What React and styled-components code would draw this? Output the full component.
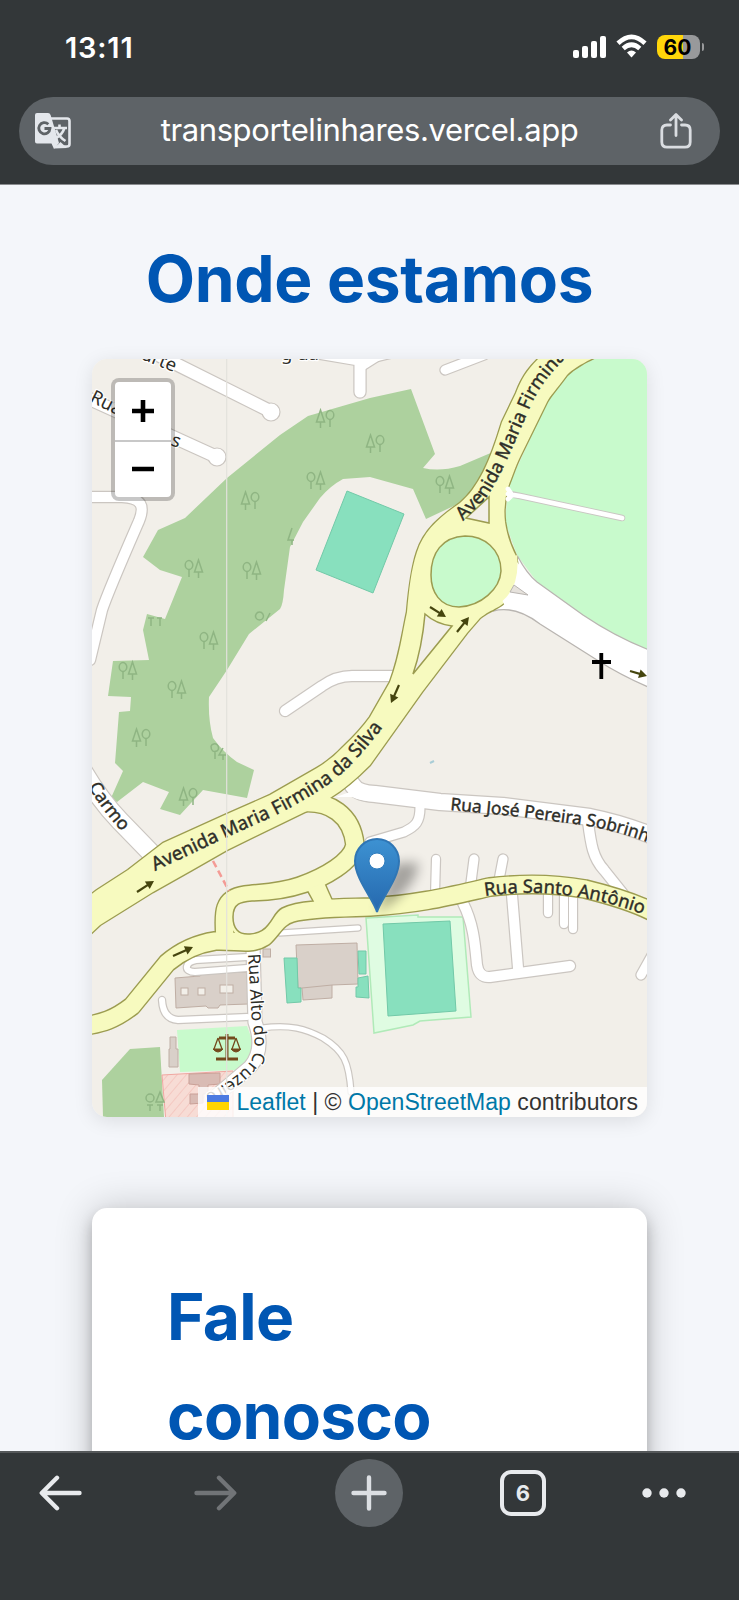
import React from "react";
import styled, { createGlobalStyle } from "styled-components";

const GlobalStyle = createGlobalStyle`
  * { box-sizing: border-box; }
  body { margin: 0; background: #f4f6fa; }
`;

const sans = `Inter, "Liberation Sans", sans-serif`;

const Screen = styled.div`
  width: 739px;
  height: 1600px;
  display: flex;
  flex-direction: column;
  overflow: hidden;
  background: #f4f6fa;
  font-family: ${sans};
`;

const Header = styled.header`
  flex: none;
  height: 185px;
  background: #333739;
  border-bottom: 1px solid #8a8c8f;
`;

const StatusBar = styled.div`
  height: 97px;
  padding: 34px 35px 0 65px;
  display: flex;
  justify-content: space-between;
  align-items: flex-start;
  color: #fff;
`;

const Clock = styled.span`
  font-size: 29px;
  line-height: 27px;
  font-weight: 600;
  letter-spacing: 0.8px;
`;

const StatusIcons = styled.div`
  display: flex;
  gap: 10px;
  height: 26px;
`;

const Battery = styled.div`
  display: flex;
  align-items: center;
  gap: 2px;
  margin-top: 1px;
  height: 24px;
`;

const BatteryBody = styled.div`
  width: 43px;
  height: 24px;
  border-radius: 8px;
  background: linear-gradient(90deg, #ffd60a 61%, #98999b 61%);
  color: #000;
  font-weight: 700;
  font-size: 21px;
  line-height: 25px;
  padding-right: 1px;
  text-align: center;
`;

const BatteryNub = styled.div`
  width: 2.5px;
  height: 8px;
  border-radius: 0 3px 3px 0;
  background: #98999b;
`;

const AddressBar = styled.div`
  margin: 0 19px;
  height: 68px;
  border-radius: 34px;
  background: #5e6367;
  display: flex;
  align-items: center;
  justify-content: space-between;
  padding: 0 28px 0 15px;
`;

const Address = styled.span`
  color: #fff;
  font-size: 31px;
  line-height: 40px;
  padding-left: 7px;
  letter-spacing: -0.38px;
  margin-top: -2px;
`;

const Page = styled.main`
  flex: 1;
  min-height: 0;
  overflow: hidden;
  padding: 0 92px;
`;

const Heading = styled.h1`
  margin: 0;
  color: #0056b3;
  font-size: 64px;
  font-weight: 700;
  line-height: ${(p) => (p.$center ? "100px" : "98.5px")};
  text-align: ${(p) => (p.$center ? "center" : "left")};
  letter-spacing: ${(p) => (p.$center ? "-0.3px" : "-0.7px")};
`;

const MapSection = styled.section`
  padding-top: 44px;
`;

const MapFrame = styled.div`
  position: relative;
  margin-top: 30px;
  height: 758px;
  border-radius: 15px;
  overflow: hidden;
  background: #f2efe9;
`;

const MapShadow = styled.div`
  border-radius: 15px;
  box-shadow: 0 4px 19px rgba(0, 0, 0, 0.1);
`;

const ZoomControl = styled.div`
  position: absolute;
  left: 19px;
  top: 19px;
  width: 64px;
  border: 4px solid rgba(0, 0, 0, 0.22);
  border-radius: 8px;
  background: #fff;
  background-clip: padding-box;
`;

const ZoomButton = styled.button`
  display: flex;
  align-items: center;
  justify-content: center;
  width: 100%;
  height: 57.5px;
  padding: 0;
  border: 0;
  background: none;
  & + & { border-top: 2px solid #c8c8c8; }
`;

const Attribution = styled.div`
  position: absolute;
  right: 0;
  bottom: 0;
  height: 30px;
  width: 449px;
  padding: 0 9px;
  display: flex;
  align-items: center;
  justify-content: flex-end;
  background: rgba(255, 255, 255, 0.8);
  color: #333;
  font: 23px/30px "Liberation Sans", Arial, sans-serif;
  letter-spacing: 0.04px;
  white-space: pre;
`;

const Flag = styled.span`
  width: 23px;
  height: 15px;
  margin-right: 7px;
  background: linear-gradient(#4c7be1 50%, #ffd500 50%);
`;

const MapLink = styled.a`
  color: #0078a8;
`;

const ContactCard = styled.section`
  margin-top: 91px;
  height: 400px;
  border-radius: 15px;
  background: #fff;
  padding: 60px 75px;
  box-shadow: 0 0 38px rgba(0, 0, 0, 0.2), 0 8px 14px rgba(0, 0, 0, 0.22);
`;

const Toolbar = styled.nav`
  flex: none;
  height: 149px;
  padding-top: 6px;
  background: #333739;
  border-top: 2px solid #55585a;
  display: grid;
  grid-template-columns: 138px 153px 155px 154px 128px;
  justify-content: start;
  justify-items: center;
  align-items: start;
`;

const ToolButton = styled.button`
  width: ${(p) => p.$w || 44}px;
  height: 68px;
  padding: 0;
  border: 0;
  background: ${(p) => (p.$round ? "#5e6367" : "none")};
  border-radius: ${(p) => (p.$round ? "50%" : "0")};
  color: ${(p) => (p.$dim ? "#717477" : "#e8eaed")};
  display: flex;
  align-items: center;
  justify-content: center;
`;

const BackButton = styled(ToolButton)`
  margin-right: 16px;
`;

const TabCount = styled.span`
  width: 46px;
  height: 46px;
  flex: none;
  border: 4px solid #e8eaed;
  border-radius: 11px;
  font: 700 22px/39px ${sans};
  text-align: center;
`;

const MapText = styled.text`
  font-family: "Noto Sans", "Open Sans", sans-serif;
  font-size: ${(p) => p.$size || 18.5}px;
  fill: #2e2e28;
  stroke: ${(p) => p.$halo || "#2e2e28"};
  stroke-width: ${(p) => (p.$halo ? "2.5px" : "0.4px")};
  stroke-linejoin: round;
  paint-order: stroke;
`;

const avenue =
  "M85 899 L97 890 L128 870 L163 843 L227 814 L270 795 L317 768 Q332 759 343 747 Q360 731 370 717 L390 682 C400 655 402 635 407 612 C409 590 411 570 417 552 C424 530 440 517 460 503 C478 488 490 462 502 422 L516 393 C522 377 530 365 546 352 L606 352 C585 362 575 367 567 375 C556 390 550 396 547 402 L521 455 C515 467 511 480 508 487 Q503 504 505 522 C507 536 511 546 516 556 C520 575 516 590 506 601 C500 607 497 607 493 610 C486 613 483 616 480 618 L467 633 L422 692 L370 765 C356 779 343 790 330 798 L307 811 L227 850 L192 870 L153 892 L100 925 L85 939 Z";

const yellowRoads = [
  "M300 803 C330 800 352 815 355 845 C352 862 325 877 300 886 C280 893 262 893 245 895 C223 898 223 912 225 937",
  "M316 886 L324 904",
  "M85 1026 C102 1023 114 1020 132 1006 L167 963 C180 952 195 944 215 941 C238 940 250 946 264 937 C273 929 277 917 292 913 C310 908 340 908 370 907 C420 904 450 896 490 887 Q540 881 585 889 Q630 900 655 913",
];

const rampIsland =
  "M233 917 C233 903 241 902 252 901 C275 901 290 898 308 892 L313 901 C300 902 290 904 282 908 C275 912 274 918 268 925 Q262 933 250 934 C238 935 233 928 233 917 Z";

const whiteRoads = [
  ["M160 356 L272 412", 12],
  ["M85 397 L217 457", 12],
  ["M85 497 L122 497 C142 498 145 506 139 521 C122 560 108 592 102 610 L90 660", 10],
  ["M80 766 Q98 798 120 821 L154 856", 18],
  ["M300 350 L359 360 L400 350 M360 355 L360 392", 11],
  ["M445 370 L484 355 M362 366 L384 352", 9],
  ["M285 711 L322 686 Q336 676 352 676 L402 676", 10],
  ["M352 784 Q356 793 375 794 L440 802 L503 806 L590 817 Q625 824 655 837", 16],
  ["M420 807 C420 822 416 826 404 832 L370 842", 9],
  ["M588 822 C591 845 593 858 604 870 L624 895", 10],
  ["M436 859 L435 895", 8],
  ["M474 859 L470 890", 9],
  ["M503 859 L498 885", 9],
  ["M463 903 C474 925 475 945 477 965 Q479 978 490 977 L570 966", 10],
  ["M512 895 L518 968", 10],
  ["M548 890 L548 913 M564 892 L564 924 M573 892 L573 929", 8],
  ["M641 975 L655 950", 9],
  ["M247 957 L196 960 C185 962 183 972 195 972 L247 968", 6],
  ["M162 1000 Q163 1019 178 1020 L247 1017", 6],
  ["M253 947 L255 1022 Q265 1050 250 1067 L216 1096", 13],
  ["M262 1028 C290 1024 306 1029 323 1038 C344 1051 349 1062 351 1092", 5],
  ["M280 933 L358 928", 5],
];

const bigRoad =
  "M505 600 L518 557 Q527 574 537 582 L583 615 Q620 640 660 654 L660 692 Q625 678 597 660 L540 624 Q515 605 493 611 Z";

const forest =
  "M370 398 L411 389 L435 454 L423 468 Q440 472 460 466 L493 452 Q485 490 460 503 L426 519 L413 489 L370 477 L343 479 Q330 486 320 498 L303 522 L290 547 L284 590 Q283 605 280 609 L249 634 L227 670 L209 697 Q208 720 213 738 Q223 752 237 762 L254 770 L247 798 L203 790 L180 815 L160 809 L169 792 L143 782 L117 802 L111 798 L123 771 L115 763 L119 712 L130 711 L131 697 L108 696 L113 661 L149 660 L143 630 L147 614 L165 619 L182 577 L160 570 L143 557 L158 530 L185 518 L227 478 L280 435 L308 416 Z";

const trees = [
  [325, 419, 1], [375, 444, 1], [250, 501, 1], [316, 481, 0], [194, 569, 0], [252, 571, 0],
  [445, 485, 0], [209, 641, 0], [128, 671, 0], [177, 690, 0], [141, 738, 1], [188, 797, 1],
];

const arrows = [
  [137, 892, 154, 881], [173, 956, 193, 947], [430, 607, 446, 617],
  [457, 632, 469, 617], [399, 685, 391, 703], [630, 671, 647, 676],
];

function TreePair({ x, y, coniferFirst }) {
  return (
    <g
      transform={`translate(${x} ${y})${coniferFirst ? " scale(-1 1)" : ""}`}
      fill="none"
      stroke="#8fb583"
      strokeWidth="1.5"
    >
      <ellipse cx="-5" cy="-4" rx="3.8" ry="4.4" />
      <path d="M-5 0 V8 M4.500 -9 L0.500 3 H8.500 Z M4.500 3 V9" />
    </g>
  );
}

function Arrow({ p: [x1, y1, x2, y2] }) {
  const angle = (Math.atan2(y2 - y1, x2 - x1) * 180) / Math.PI;
  const len = Math.hypot(x2 - x1, y2 - y1);
  return (
    <g transform={`translate(${x1} ${y1}) rotate(${angle})`}>
      <path d={`M0 0 H${len - 4}`} stroke="#45450e" strokeWidth="2.2" />
      <path d={`M${len} 0 l-8 -4.5 v9 z`} fill="#45450e" />
    </g>
  );
}

function CurvedLabel({ id, d, children, ...rest }) {
  return (
    <>
      <path id={id} d={d} fill="none" />
      <MapText {...rest}>
        <textPath href={`#${id}`}>{children}</textPath>
      </MapText>
    </>
  );
}

function StreetMap() {
  return (
    <svg width="555" height="758" viewBox="92 359 555 758" display="block">
      <defs>
        <pattern id="hatch" width="7" height="7" patternUnits="userSpaceOnUse" patternTransform="rotate(40)">
          <rect width="7" height="7" fill="#f7dcd5" />
          <path d="M0 0 V7" stroke="#f4c8c1" strokeWidth="2" />
        </pattern>
        <linearGradient id="pinFill" x1="0" y1="0" x2="0" y2="1">
          <stop offset="0" stopColor="#3d92d2" />
          <stop offset="1" stopColor="#2568ae" />
        </linearGradient>
        <filter id="soft" x="-60%" y="-60%" width="220%" height="220%">
          <feGaussianBlur stdDeviation="6" />
        </filter>
      </defs>

      <path d={forest} fill="#add19e" />
      <path d="M130 1049 L160 1047 L164 1117 L103 1117 L102 1080 Z" fill="#add19e" />
      <path d="M597 350 L567 375 L547 402 L508 487 L505 522 L517 555 L537 582 L583 615 L603 630 L660 655 V350 Z" fill="#c8facc" />
      <path d="M347 491 L404 514 L373 593 L316 570 Z" fill="#88e0be" stroke="#72c9a8" />
      <path d="M366 918 L418 915 V917 L463 917 L471 1017 L420 1021 L413 1025 L374 1033 Z" fill="#dffce2" stroke="#b0eab8" strokeWidth="1.5" />
      <path d="M383 924 L450 921 L456 1011 L388 1016 Z" fill="#88e0be" stroke="#72c9a8" />
      <path d="M177 1030 L247 1026 L256 1050 L237 1070 L180 1072 Z" fill="#c8facc" />
      <path d="M162 1075 L233 1071 V1122 H166 Z" fill="url(#hatch)" stroke="#f0a6a0" />
      {trees.map(([x, y, c]) => (
        <TreePair key={`${x}-${y}`} x={x} y={y} coniferFirst={c} />
      ))}
      <g fill="none" stroke="#8fb583" strokeWidth="1.5">
        <path d="M292 528 L288 540 H294 M292 540 V545 M148 618 h6 M151 618 V626 M157 618 h5 M160 618 V626" />
        <path d="M256 618 a4 4 0 1 1 7 0 a4 4 0 0 1 -7 0 M270 613 L266 621" />
        <path d="M211 746 a4 4 0 1 1 6 5 q-6 2 -6 -5 M215 752 V759 M223 748 L219 755 H226 M223 755 V760" />
        <circle cx="150" cy="1098" r="4" />
        <path d="M160 1092 L156 1102 H164 Z M147 1105 h6 M150 1105 V1111 M157 1105 h6 M160 1105 V1111" />
      </g>

      <g fill="#d9d0c9" stroke="#bfaea4">
        <path d="M296 945 L357 943 L358 984 L332 985 V998 L303 1000 L302 988 L298 988 Z" />
        <path d="M302 988 L332 985" />
        <path d="M175 978 L200 976 L205 972 L247 972 L248 1004 L220 1005 L218 1008 L208 1008 L206 1006 L176 1008 Z" />
        <rect x="263" y="949" width="7.5" height="8" />
        <path d="M170 1037 H176 V1049 H178 V1067 H169 V1049 H170 Z" />
        <g fill="#f2efe9">
          <rect x="181" y="988" width="7" height="7" />
          <rect x="198" y="988" width="7" height="7" />
          <rect x="220" y="985" width="13" height="8" />
        </g>
      </g>
      <path d="M189 1074 L220 1073 L220 1084 L208 1085 V1094 H203 V1103 L190 1104 V1094 H199 V1085 L189 1084 Z" fill="#d9bbb4" stroke="#c9a097" />
      <g fill="#88e0be" stroke="#72c9a8">
        <path d="M284 958 H297 L298 988 H301 V1002 L287 1003 Z" />
        <path d="M358 951 L366 951 V974 L359 974 Z M358 978 L368 976 L369 998 L356 997 V987 H358 Z" />
      </g>

      <g fill="none" stroke="#cbc6c1" strokeLinecap="round" strokeLinejoin="round">
        {whiteRoads.map(([d, w]) => (
          <path key={d} d={d} strokeWidth={w + 2.4} />
        ))}
      </g>
      <g fill="#fff" stroke="#cbc6c1" strokeWidth="1.2">
        <circle cx="271" cy="412" r="9" />
        <circle cx="217" cy="457" r="9" />
      </g>
      <g fill="none" stroke="#fff" strokeLinecap="round" strokeLinejoin="round">
        {whiteRoads.map(([d, w]) => (
          <path key={d} d={d} strokeWidth={w} />
        ))}
      </g>
      <path d={bigRoad} fill="#fff" stroke="#b9b5b1" strokeWidth="1.3" />

      <g fill="none" stroke="#9c9c50" strokeLinejoin="round">
        {yellowRoads.map((d) => (
          <path key={d} d={d} strokeWidth="20" />
        ))}
        <path d={avenue} strokeWidth="2.6" />
      </g>
      <g fill="none" stroke="#f7fabf">
        <path d={avenue} fill="#f7fabf" stroke="none" />
        {yellowRoads.map((d) => (
          <path key={d} d={d} strokeWidth="17.2" />
        ))}
        <path d={rampIsland} strokeWidth="7" strokeLinejoin="round" />
      </g>
      <path d={rampIsland} fill="#f2efe9" stroke="#9c9c50" strokeWidth="1.5" />
      <path d="M501 598 Q517 585 517 562 L521 567 L521 600 L505 606 Z" fill="#fff" />
      <path d="M493 607 Q521 593 517 555 L505 562 L490 600 Z" fill="#f7fabf" />
      <path d="M514 585 L528 595 L510 592 Z" fill="#e6e2dc" stroke="#b9b5b1" />
      <g stroke="#9c9c50" strokeWidth="1.5">
        <path d="M465 536 C484 536 501 549 501 571 C500 589 481 606 459 607 C440 607 431 592 431 575 C431 553 442 537 465 536 Z" fill="#c8facc" />
        <path d="M425 614 Q436 624 452 626 L413 674 Q422 648 425 614 Z M489 497 L489 523 L466 518 Z" fill="#f2efe9" />
      </g>
      <path d="M510 494 L520 496 L622 518" fill="none" stroke="#c9c6c2" strokeWidth="6.500" strokeLinecap="round" strokeLinejoin="round" />
      <path d="M508 489 L512 495 L508 499 M508 494 L520 496 L622 518" fill="none" stroke="#fff" strokeWidth="4.800" strokeLinecap="round" strokeLinejoin="round" />
      <path d="M336 797 L350 792 L353 783 L372 789 L372 801 Q360 801 352 797 Z" fill="#fff" />
      <path d="M213 861 L229 891" stroke="#f49b95" strokeWidth="2.500" strokeDasharray="7 4" />
      <path d="M430 763 l4 -2" stroke="#a9cdd6" strokeWidth="2" />
      {arrows.map((p) => (
        <Arrow key={p.join()} p={p} />
      ))}
      <path d="M592 662 H611 M601.3 653 V679" stroke="#000" strokeWidth="3.800" />

      <g stroke="#734a1c" fill="#734a1c" transform="translate(227 1047)">
        <path d="M-8 -9 H8 M-11 12 H11 M0 -13 V12" strokeWidth="3" />
        <path d="M-9 -9 L-13 2 M-9 -9 L-5 2 M9 -9 L13 2 M9 -9 L5 2" strokeWidth="1.300" />
        <path d="M-14 2 H-4 Q-9 8 -14 2 Z M14 2 H4 Q9 8 14 2 Z" />
      </g>

      <CurvedLabel id="lblTop" d="M463 521 L486 498 Q499 478 509 455 L531 405 Q543 378 574 350" $size={18.6}>Avenida Maria Firmina</CurvedLabel>
      <CurvedLabel id="lblAvenue" d="M155 871 L223 839 L274 816 Q318 794 340 775 Q362 756 391 716" $size={19}>Avenida Maria Firmina da Silva</CurvedLabel>
      <CurvedLabel id="lblJose" d="M450 810 L523 817 L583 825 Q625 832 670 851" $size={17.4}>Rua José Pereira Sobrinho</CurvedLabel>
      <CurvedLabel id="lblSanto" d="M485 896 Q530 889 578 897 Q620 904 660 921" $size={18.4}>Rua Santo Antônio</CurvedLabel>
      <CurvedLabel id="lblAlto" d="M248 954 L252 1022 Q257 1044 252 1058 Q243 1075 208 1093" $halo="#fff" $size={17.2}>Rua Alto do Cruzeiro</CurvedLabel>
      <CurvedLabel id="lblCarmo" d="M84 778 Q97 806 130 840" $size={18}>. Carmo</CurvedLabel>
      <CurvedLabel id="lblS" d="M89 401 L165 439 L190 452" $halo="#fff">Rua</CurvedLabel>
      <MapText $halo="#fff" transform="translate(170 445) rotate(20)">s</MapText>
      <MapText $halo="#fff" transform="translate(141 359) rotate(22)">arte</MapText>
      <MapText $halo="#fff" transform="translate(281 360)">g ua</MapText>

      <path d="M226.700 359 V1117" stroke="#e3e1dc" strokeWidth="1.200" />

      <path d="M377 913 L394 864 L418 862 Q420 886 377 913 Z" fill="#000" opacity="0.32" filter="url(#soft)" />
      <path
        d="M377 912 C374 900 355 879 355 861 A22 22 0 0 1 399 861 C399 879 380 900 377 912 Z"
        fill="url(#pinFill)"
        stroke="#2f76b5"
        strokeWidth="2"
      />
      <circle cx="377" cy="861" r="8" fill="#fff" stroke="#2f7cbd" strokeWidth="1" />
    </svg>
  );
}

function SignalIcon() {
  return (
    <svg width="33" height="26" viewBox="0 0 33 26" fill="#fff">
      <rect x="0" y="16" width="6" height="8" rx="2" />
      <rect x="9" y="12" width="6" height="12" rx="2" />
      <rect x="18" y="7" width="6" height="17" rx="2" />
      <rect x="27" y="2" width="6" height="22" rx="2" />
    </svg>
  );
}

function WifiIcon() {
  return (
    <svg width="31" height="26" viewBox="0 0 31 26" fill="none" stroke="#fff" strokeWidth="4.600">
      <path d="M2 9.200 Q15.500 -3.500 29 9.200" />
      <path d="M7.200 14.500 Q15.500 7 23.800 14.500" />
      <path d="M11 18.500 Q15.500 14.500 20 18.500 L15.500 23.600 Z" fill="#fff" stroke="none" />
    </svg>
  );
}

function TranslateIcon() {
  return (
    <svg width="38" height="38" viewBox="0 0 38 38">
      <path d="M17 6.500 H33 Q35.500 6.500 35.500 9 V32 Q35.500 34.500 33 34.500 H21" fill="none" stroke="#e4e7ec" strokeWidth="2.600" />
      <path d="M3 1 H14 Q16 1 16.600 3 L25 31 L20 37 L17.500 31.500 H3 Q1 31.500 1 29.500 V3 Q1 1 3 1 Z" fill="#e4e7ec" />
      <path d="M20 36.500 L26.500 30 L33 36 Z" fill="#e4e7ec" />
      <path d="M19 16 H33 M25.500 12.500 V16 M30.500 16 Q28 23 22 26 M22 18 Q25 25 31.500 29" fill="none" stroke="#e4e7ec" strokeWidth="2.600" />
      <path d="M14.300 12.200 A5.600 5.600 0 1 0 16 16.500 H10.500" fill="none" stroke="#5e6367" strokeWidth="2.800" />
    </svg>
  );
}

function ShareIcon() {
  return (
    <svg width="32" height="36" viewBox="0 0 32 36" fill="none" stroke="#dadde1" strokeWidth="2.800" strokeLinecap="round" strokeLinejoin="round">
      <path d="M10.500 12 H7 Q1.800 12 1.800 17 V29 Q1.800 34.200 7 34.200 H25 Q30.200 34.200 30.200 29 V17 Q30.200 12 25 12 H21.500" />
      <path d="M16 22.500 V2 M10.500 7 L16 1.600 L21.500 7" />
    </svg>
  );
}

function ArrowIcon({ flip }) {
  return (
    <svg width="44" height="40" viewBox="0 0 44 40" fill="none" stroke="currentColor" strokeWidth="4.400" strokeLinecap="round" strokeLinejoin="round" transform={flip ? "scale(-1 1)" : undefined}>
      <path d="M40.500 20 H3 M18 4.800 L2.800 20 L18 35.200" />
    </svg>
  );
}

export default function App() {
  return (
    <Screen>
      <GlobalStyle />
      <Header>
        <StatusBar>
          <Clock>13:11</Clock>
          <StatusIcons>
            <SignalIcon />
            <WifiIcon />
            <Battery>
              <BatteryBody>60</BatteryBody>
              <BatteryNub />
            </Battery>
          </StatusIcons>
        </StatusBar>
        <AddressBar>
          <TranslateIcon />
          <Address>transportelinhares.vercel.app</Address>
          <ShareIcon />
        </AddressBar>
      </Header>

      <Page>
        <MapSection>
          <Heading $center>Onde estamos</Heading>
          <MapShadow>
            <MapFrame>
              <StreetMap />
              <ZoomControl>
                <ZoomButton aria-label="Zoom in">
                  <svg width="24" height="24" stroke="#000" strokeWidth="4.600"><path d="M1 12 H23 M12 1 V23" /></svg>
                </ZoomButton>
                <ZoomButton aria-label="Zoom out">
                  <svg width="24" height="24" stroke="#000" strokeWidth="4.600"><path d="M1 12 H23" /></svg>
                </ZoomButton>
              </ZoomControl>
              <Attribution>
                <Flag />
                <MapLink>Leaflet</MapLink> | © <MapLink>OpenStreetMap</MapLink> contributors
              </Attribution>
            </MapFrame>
          </MapShadow>
        </MapSection>

        <ContactCard>
          <Heading>Fale<br />conosco</Heading>
        </ContactCard>
      </Page>

      <Toolbar>
        <BackButton><ArrowIcon /></BackButton>
        <ToolButton $dim><ArrowIcon flip /></ToolButton>
        <ToolButton $round $w={68}>
          <svg width="36" height="36" fill="none" stroke="#dcdfe3" strokeWidth="4.400" strokeLinecap="round">
            <path d="M2.500 18 H33.500 M18 2.500 V33.500" />
          </svg>
        </ToolButton>
        <ToolButton><TabCount>6</TabCount></ToolButton>
        <ToolButton>
          <svg width="44" height="12" fill="currentColor">
            <circle cx="5" cy="6" r="4.700" />
            <circle cx="22" cy="6" r="4.700" />
            <circle cx="39" cy="6" r="4.700" />
          </svg>
        </ToolButton>
      </Toolbar>
    </Screen>
  );
}
